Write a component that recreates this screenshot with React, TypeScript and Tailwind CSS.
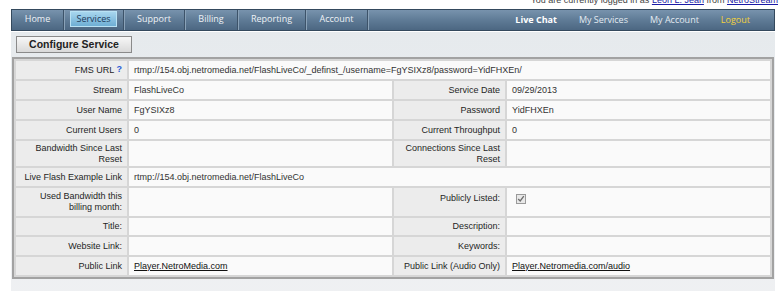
import React from "react";

const tabs = [
  { label: "Home", w: "w-[52px]" },
  { label: "Services", w: "w-[60px]", active: true },
  { label: "Support", w: "w-[61px]" },
  { label: "Billing", w: "w-[53px]" },
  { label: "Reporting", w: "w-[68px]" },
  { label: "Account", w: "w-[62px]" },
];

const lbl = "bg-[#ececec] text-right px-[5px] text-[#1f1f1f] leading-[11px]";
const val = "bg-[#fafafa] text-left px-[5px] text-[#333] leading-[11px]";

function Checkbox() {
  return (
    <span className="inline-flex w-[10px] h-[10px] border border-[#9a9a9a] bg-[#e8e8e8] items-center justify-center mt-[2px] ml-[4px]">
      <svg viewBox="0 0 10 10" className="w-[8px] h-[8px]">
        <path d="M1.5 5 L4 7.5 L8.5 1.5" fill="none" stroke="#6b6b6b" strokeWidth="1.6" />
      </svg>
    </span>
  );
}

export default function App() {
  return (
    <div className="w-[784px] h-[291px] overflow-hidden bg-white font-['Liberation_Sans',Arial,sans-serif]">
      {/* logged in strip, mostly scrolled off */}
      <div className="h-[6px] flex items-end justify-end pr-[6px]">
        <span className="text-[9px] leading-[11px] text-[#444] whitespace-nowrap">
          You are currently logged in as{" "}
          <a className="text-[#1a1aa6] underline">Leon L. Jean</a> from{" "}
          <a className="text-[#1a1aa6] underline">NetroStream</a>
        </span>
      </div>

      <div className="h-[3px]" />

      {/* nav bar */}
      <div className="ml-[11px] w-[764px] h-[22px] border border-[#34495d] bg-gradient-to-b from-[#7893ad] via-[#5f7b96] to-[#4c6782] flex items-stretch font-['Open_Sans','Noto_Sans',sans-serif] text-[9px]">
        {tabs.map((t) => (
          <div
            key={t.label}
            className={`${t.w} h-full flex items-stretch px-[6px] pt-[1px] pb-[3px] border-r border-[#3d5369] shadow-[1px_0_0_#8aa2b8]`}
          >
            <div
              className={`flex-1 flex items-center justify-center ${
                t.active
                  ? "bg-gradient-to-b from-[#a7d6ee] to-[#6eaed4] border border-[#b9e2f4] text-[#1d3b5b]"
                  : "text-[#eef2f6]"
              }`}
            >
              {t.label}
            </div>
          </div>
        ))}
        <div className="ml-auto flex items-center gap-[22px] pr-[24px]">
          <span className="font-bold text-white">Live Chat</span>
          <span className="text-[#e3eaf1]">My Services</span>
          <span className="text-[#e3eaf1]">My Account</span>
          <span className="text-[#f3d23c]">Logout</span>
        </div>
      </div>

      {/* content panel */}
      <div className="ml-[11px] w-[764px] mt-[1px] h-[300px] bg-gradient-to-b from-[#e6eaed] to-[#f0f1f3] pt-[4px]">
        <button className="block ml-[5px] w-[116px] h-[17px] border border-[#8a8a8a] bg-gradient-to-b from-[#f7f7f7] to-[#d9d9d9] text-[10.5px] font-bold text-[#222] leading-none">
          Configure Service
        </button>

        <table className="mt-[4px] ml-[1px] w-[762px] table-fixed border-2 border-[#a2a2a2] border-separate border-spacing-[2px] bg-[#d6d6d6] text-[9px]">
          <colgroup>
            <col className="w-[111px]" />
            <col className="w-[263px]" />
            <col className="w-[111px]" />
            <col className="w-[263px]" />
          </colgroup>
          <tbody>
            <tr className="h-[18px]">
              <td className={lbl}>
                FMS URL <span className="text-[#2a5bd7] font-bold relative -top-[1px]">?</span>
              </td>
              <td className={val} colSpan={3}>
                rtmp://154.obj.netromedia.net/FlashLiveCo/_definst_/username=FgYSIXz8/password=YidFHXEn/
              </td>
            </tr>
            <tr className="h-[18px]">
              <td className={lbl}>Stream</td>
              <td className={val}>FlashLiveCo</td>
              <td className={lbl}>Service Date</td>
              <td className={val}>09/29/2013</td>
            </tr>
            <tr className="h-[18px]">
              <td className={lbl}>User Name</td>
              <td className={val}>FgYSIXz8</td>
              <td className={lbl}>Password</td>
              <td className={val}>YidFHXEn</td>
            </tr>
            <tr className="h-[18px]">
              <td className={lbl}>Current Users</td>
              <td className={val}>0</td>
              <td className={lbl}>Current Throughput</td>
              <td className={val}>0</td>
            </tr>
            <tr className="h-[25px]">
              <td className={lbl}>
                Bandwidth Since Last
                <br />
                Reset
              </td>
              <td className={val}></td>
              <td className={lbl}>
                Connections Since Last
                <br />
                Reset
              </td>
              <td className={val}></td>
            </tr>
            <tr className="h-[18px]">
              <td className={lbl}>Live Flash Example Link</td>
              <td className={val} colSpan={3}>
                rtmp://154.obj.netromedia.net/FlashLiveCo
              </td>
            </tr>
            <tr className="h-[28px]">
              <td className={`${lbl} align-top pt-[3px]`}>
                Used Bandwidth this
                <br />
                billing month:
              </td>
              <td className={val}></td>
              <td className={`${lbl} align-top pt-[5px]`}>Publicly Listed:</td>
              <td className={`${val} align-top pt-[4px]`}>
                <Checkbox />
              </td>
            </tr>
            <tr className="h-[17px]">
              <td className={lbl}>Title:</td>
              <td className={val}></td>
              <td className={lbl}>Description:</td>
              <td className={val}></td>
            </tr>
            <tr className="h-[18px]">
              <td className={lbl}>Website Link:</td>
              <td className={val}></td>
              <td className={lbl}>Keywords:</td>
              <td className={val}></td>
            </tr>
            <tr className="h-[18px]">
              <td className={lbl}>Public Link</td>
              <td className={val}>
                <a className="text-[#111] underline">Player.NetroMedia.com</a>
              </td>
              <td className={lbl}>Public Link (Audio Only)</td>
              <td className={val}>
                <a className="text-[#111] underline">Player.Netromedia.com/audio</a>
              </td>
            </tr>
          </tbody>
        </table>
      </div>
    </div>
  );
}
